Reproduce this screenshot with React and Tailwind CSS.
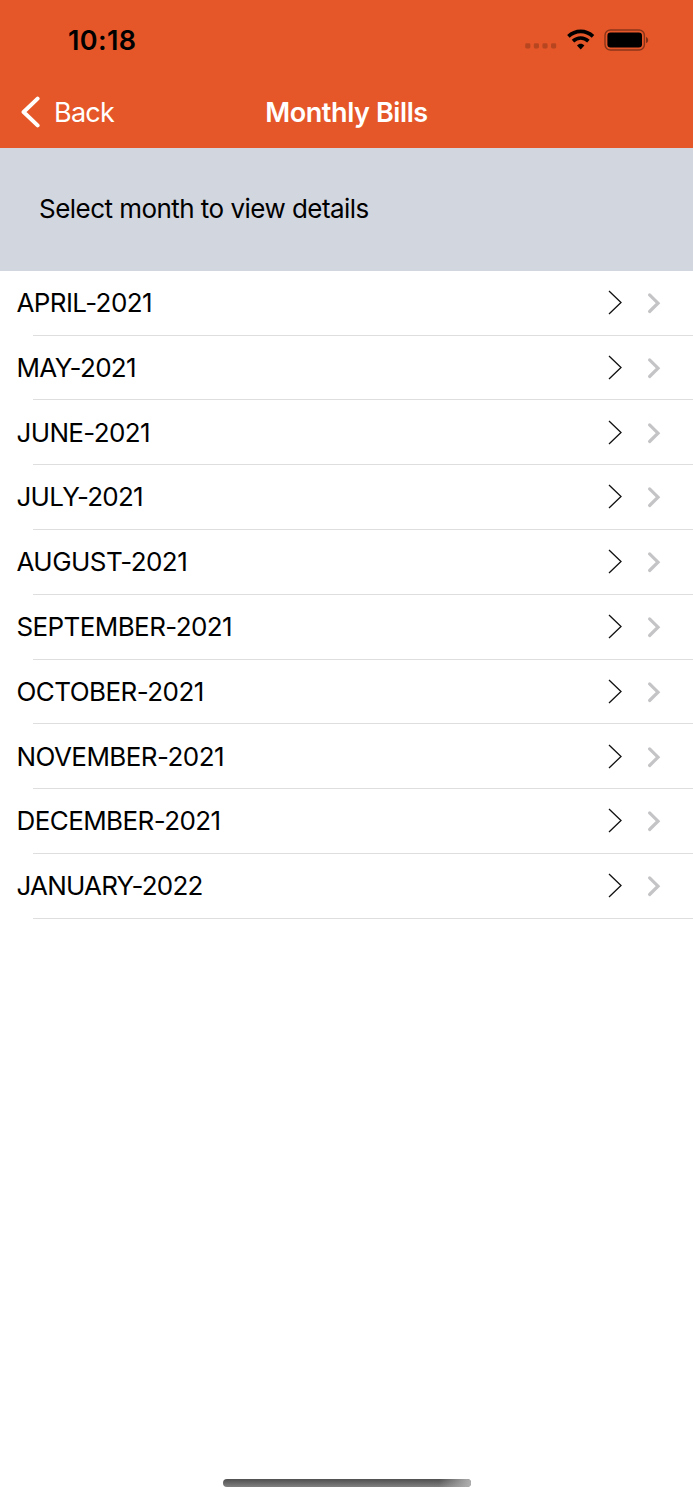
const months = [
  { label: 'APRIL-2021', tracking: 'tracking-[-0.6px]' },
  { label: 'MAY-2021', tracking: 'tracking-[-0.68px]' },
  { label: 'JUNE-2021', tracking: 'tracking-[-0.64px]' },
  { label: 'JULY-2021', tracking: 'tracking-[-0.78px]' },
  { label: 'AUGUST-2021', tracking: 'tracking-[-0.56px]' },
  { label: 'SEPTEMBER-2021', tracking: 'tracking-[-0.6px]' },
  { label: 'OCTOBER-2021', tracking: 'tracking-[-0.56px]' },
  { label: 'NOVEMBER-2021', tracking: 'tracking-[-0.56px]' },
  { label: 'DECEMBER-2021', tracking: 'tracking-[-0.58px]' },
  { label: 'JANUARY-2022', tracking: 'tracking-[-0.78px]' }
];

function StatusBar() {
  return (
    <div className="flex h-20 items-center justify-between pr-[44px] pl-[68px] text-black">
      <span className="pt-px text-[27px] leading-8 font-semibold tracking-[0.35px]">10:18</span>
      <div className="flex items-center">
        <svg className="mt-[12px] mr-[10px] h-[6px] w-[32px]" viewBox="0 0 32 6" fill="#000" fillOpacity="0.2">
          <rect x="0.2" y="0.3" width="5.2" height="5.2" rx="1.4" />
          <rect x="8.8" y="0.3" width="5.2" height="5.2" rx="1.4" />
          <rect x="17.4" y="0.3" width="5.2" height="5.2" rx="1.4" />
          <rect x="26" y="0.3" width="5.2" height="5.2" rx="1.4" />
        </svg>
        <svg className="mt-[-2px] mr-[9px] h-[21px] w-[28px]" viewBox="0 0 28 21" fill="none" stroke="#000" strokeWidth="3.6">
          <path d="M1.4 7.4 C8.4 0.7 19 0.7 26 7.4" />
          <path d="M6 12.2 C10.6 8 16.8 8 21.4 12.2" />
          <path d="M10 16.4 C12.2 14.3 15.2 14.3 17.4 16.4 L13.7 20.4 Z" fill="#000" stroke="none" />
        </svg>
        <svg className="mt-[-1px] h-[22px] w-[45px]" viewBox="0 0 45 22">
          <rect x="1" y="1" width="39.4" height="20" rx="5.4" fill="none" stroke="#000" strokeOpacity="0.4" strokeWidth="1.4" />
          <rect x="3.4" y="3.6" width="34.6" height="14.8" rx="3.2" fill="#000" />
          <path d="M42 7.9 C44.9 9 44.9 13 42 14.1 Z" fill="#000" fillOpacity="0.45" />
        </svg>
      </div>
    </div>
  );
}

function NavBar() {
  return (
    <div className="grid h-[68px] grid-cols-3 items-center pb-[3px] text-[27px] leading-8 text-white">
      <button className="flex items-center pl-[20px]">
        <svg className="mr-[14px] mb-[2px] h-8 w-5" viewBox="0 0 20 32" fill="none" stroke="currentColor" strokeWidth="4" strokeLinecap="round" strokeLinejoin="round">
          <path d="M17.6 2.6 L3.6 16 L17.6 29.4" />
        </svg>
        <span className="tracking-[-0.75px]">Back</span>
      </button>
      <h1 className="text-center font-semibold whitespace-nowrap tracking-[-0.4px]">Monthly Bills</h1>
    </div>
  );
}

function MonthRow({ label, tracking }) {
  return (
    <li className="flex h-[64.8px] flex-col">
      <div className="flex flex-1 items-center pt-[0.4px] pr-[32px] pl-[16.5px]">
        <span className={`flex-1 text-[26px] leading-8 text-black ${tracking}`}>{label}</span>
        <svg className="mr-[24px] h-[26px] w-[16px]" viewBox="0 0 16 26" fill="none" stroke="#111" strokeWidth="1.3">
          <path d="M2 1 L14 12.5 L2 24" />
        </svg>
        <svg className="h-[22px] w-[14px]" viewBox="0 0 14 22" fill="none" stroke="#c4c4c6" strokeWidth="3.2" strokeLinecap="round">
          <path d="M2.6 2.9 L11 11.2 L2.6 19.5" />
        </svg>
      </div>
      <div className="ml-[32.5px] h-px bg-[#dedede]" />
    </li>
  );
}

export default function App() {
  return (
    <div className="flex h-[1500px] w-[693px] flex-col bg-white font-['Inter','Liberation_Sans',sans-serif]">
      <header className="bg-[#e55728]">
        <StatusBar />
        <NavBar />
      </header>
      <section className="h-[122.9px] bg-[#d2d6df] pt-[45px] pl-[39px]">
        <p className="text-[26px] leading-8 tracking-[-0.54px] text-black">Select month to view details</p>
      </section>
      <ul className="flex-1">
        {months.map((month) => (
          <MonthRow key={month.label} {...month} />
        ))}
      </ul>
      <div className="mb-[13px] ml-[223px] flex h-2 w-[248px] overflow-hidden rounded-full bg-linear-to-b from-[#505050] to-[#808080]">
        <div className="ml-auto w-8 bg-linear-to-r from-transparent to-[#b0b0b0]" />
      </div>
    </div>
  );
}
